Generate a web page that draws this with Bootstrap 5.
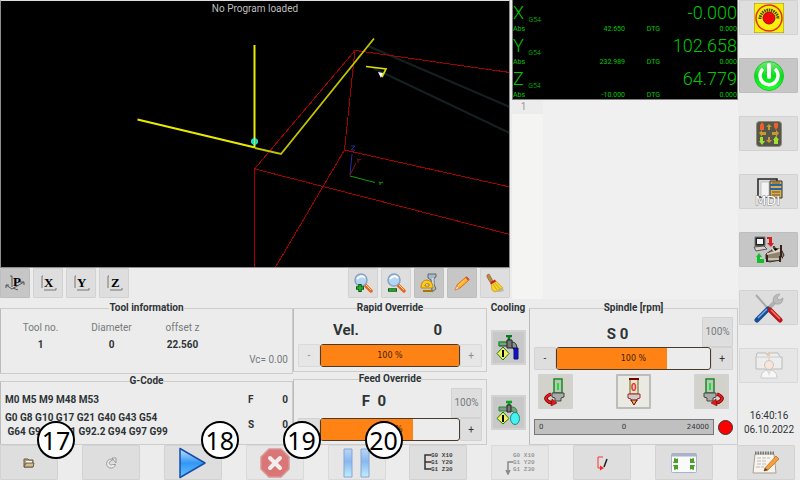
<!DOCTYPE html>
<html lang="en">
<head>
<meta charset="utf-8">
<meta name="viewport" content="width=device-width, initial-scale=1">
<title>CNC control</title>
<link href="https://cdn.jsdelivr.net/npm/bootstrap@5.3.0/dist/css/bootstrap.min.css" rel="stylesheet">
<style>
  body { font: 10px/14px Roboto, sans-serif; color: #2e3436; background: #ececec; }
  .screen { display: grid; grid-template-columns: minmax(0, 1fr) 62px; grid-template-rows: minmax(0, 1fr) auto; }
  .main-area { display: grid; grid-template-rows: minmax(0, 1fr) 146px; }
  .upper { display: grid; grid-template-columns: minmax(0, 512fr) minmax(0, 226fr); }
  .path-area { padding-right: 2px; }
  .view-bar { height: 31px; }
  .view-group { gap: 3px; }
  .btn { --bs-btn-padding-x: 0; --bs-btn-padding-y: 0; --bs-btn-font-size: 10px; --bs-btn-line-height: 14px;
         --bs-btn-color: #2e3436; --bs-btn-bg: #dedede; --bs-btn-border-color: #d2d2d2; --bs-btn-border-radius: 1px;
         --bs-btn-disabled-color: #8b8e8f; --bs-btn-disabled-bg: #e6e6e6; --bs-btn-disabled-border-color: #d9d9d9; --bs-btn-disabled-opacity: 1;
         --bs-btn-active-bg: #c6c6c6; --bs-btn-active-border-color: #bebebe;
         display: flex; align-items: center; justify-content: center; }
  .btn svg { display: block; }
  .wide-btn { width: 58px; height: 35px; }
  .side-btn { width: 59px; height: 35px; }
  .side-nav { gap: 23px; margin-left: 1px; }
  .tool-btn { width: 30px; height: 30px; }
  .plot { background: #000; border: 1px solid #8e8e8e; border-top-color: #ddd; color: #bfbfbf; }
  .plot svg { width: 100%; height: 100%; display: block; }
  .plot-title { top: 1px; }
  .dro { background: #000; color: #00c800; height: 100px; border: solid #808080; border-width: 0 1px 1px; }
  .dro-axis { height: 33px; }
  .dro-big { font-size: 18px; line-height: 26px; font-weight: 300; }
  .dro-small { font-size: 7px; line-height: 8px; }
  .dro-big .dro-small { vertical-align: -3px; }
  .dro-sub { display: grid; grid-template-columns: 112fr 35fr 77fr; line-height: 6px; }
  .editor { background: #f0f0f0; color: #999; }
  .gutter { width: 31px; background: #f4f4f3; }
  .gutter-line { height: 14px; background: #ececec; }
  .panels { display: grid; grid-template-columns: minmax(0, 293fr) minmax(0, 194fr) minmax(0, 42fr) minmax(0, 209fr); padding-top: 2px; }
  fieldset { border: 1px solid #ccc; border-left-color: #bbb; border-radius: 1px; }
  legend { float: none; width: auto; margin: 0 auto; padding: 0; font-size: 10px; line-height: 14px; font-weight: 700; }
  .h-short { height: 71px; }
  .h-tall { height: 73px; }
  .tool-table { width: 213px; table-layout: fixed; text-align: center; }
  .tool-table th { font-weight: 400; color: #777b7c; line-height: 17px; padding: 0; }
  .tool-table td { font-weight: 700; line-height: 17px; padding: 0; }
  .faint { color: #777b7c; }
  .codes { font-weight: 700; }
  .modal-m { margin: 5px 0 4px; }
  .fs-list { width: 40px; padding-top: 5px; gap: 11px; }
  .big-read { font-size: 15px; line-height: 18px; font-weight: 700; }
  .vel-row { padding: 0 40px 0 35px; }
  .read-row { padding-right: 32px; }
  .feed-row { margin-top: 2px; }
  .rpm-row { margin-top: 10px; }
  .step-btn { width: 22px; height: 23px; flex: none; }
  .meter { height: 23px; background: #ececec; border: 1px solid #4a3a2c; border-radius: 3px; }
  .meter .progress-bar { background: #ff8215; }
  .meter-text { inset: 0; font: 8px/22px "DejaVu Sans", sans-serif; color: #3e220c; text-align: center; }
  .reset-btn { width: 31px; height: 30px; }
  .frame-btn { width: 35px; height: 35px; --bs-btn-bg: #d2d2ca; --bs-btn-border-color: #d2d2d2; --bs-btn-border-width: 2px; }
  .frame-btn.cool { --bs-btn-bg: #c8c8c8; }
  .frame-btn.stop { --bs-btn-bg: #eaeae2; --bs-btn-border-color: #bcbcbc; }
  .rpm { height: 16px; background: #c0c0c0; border: 1px solid #777; font: 7px/14px "DejaVu Sans", sans-serif; display: grid; grid-template-columns: 1fr 1fr 1fr; }
  .lamp { width: 15px; height: 15px; background: #f00; border: 1px solid #333; }
  .marker { width: 38px; height: 38px; left: 37px; top: -24px; background: #fff; border: 2px solid #000; color: #000; font: 25px/34px "Noto Sans", sans-serif; text-align: center; z-index: 2; pointer-events: none; }
  .action-bar { grid-column: 1 / -1; padding-right: 5px; }
</style>
</head>
<body>
<div class="screen vh-100 overflow-hidden">
  <main class="main-area">
    <div class="upper">
      <section class="d-flex flex-column path-area" aria-label="Tool path">
        <div class="plot position-relative flex-grow-1 overflow-hidden w-100">
          <div class="plot-title position-absolute w-100 text-center">No Program loaded</div>
          <svg viewBox="1 1 508 266" preserveAspectRatio="xMinYMin slice" fill="none" aria-hidden="true">
            <g stroke="#152022" stroke-width="2"><path d="M368 46L510 107M373 68L510 133"/></g>
            <g stroke="#a80000" shape-rendering="crispEdges"><path d="M254.500 268V169L355 50.500L510 72.500M355 50L344.500 150L510 187M344.500 150L275 268M255 169L510 234.500"/></g>
            <path d="M255 148L281 154L374 38.500" stroke="#c4c400" stroke-width="1.800"/>
            <path d="M137.500 119.500L255 147.500" stroke="#eaea00" stroke-width="2"/>
            <path d="M254.500 45V147" stroke="#eaea00" stroke-width="2"/>
            <path d="M254.500 137l3.500 3v3l-3.500 3-3.500-3v-3z" fill="#18dcc4"/><path d="M254.500 136V147" stroke="#e0e840"/>
            <path d="M366 66.500L386 69L382 77" stroke="#dede00" stroke-width="1.700"/><path d="M378 72l5 1-2 5z" fill="#fff"/>
            <path d="M350 175L352 154M351 146h4l-4 4h4" stroke="#2c2ca0"/>
            <path d="M350 175L356 163M357 159l2 1 2-1M358 160v3" stroke="#801818"/>
            <path d="M350 176L375 182.500M379 182l2 1 2-1M380 183v2" stroke="#10a010"/>
          </svg>
        </div>
        <div class="d-flex justify-content-between view-bar">
          <div class="d-flex view-group">
            <button class="btn tool-btn active" aria-label="Perspective view"><svg width="20" height="20" viewBox="0 0 20 20"><path d="M5 3h2M7 3v11M1 12l6 4 12-7M1 15V12h3M15 9h4v3M8 15l5 2" fill="none" stroke="#555"/><text x="8" y="13" font-family="Liberation Serif" font-weight="700" font-size="13">P</text></svg></button>
            <button class="btn tool-btn" aria-label="X view"><svg width="20" height="20" viewBox="0 0 20 20"><path d="M5 3H4v12M6 17h12v-2" fill="none" stroke="#777"/><text x="6" y="14" font-family="Liberation Serif" font-weight="700" font-size="13">X</text></svg></button>
            <button class="btn tool-btn" aria-label="Y view"><svg width="20" height="20" viewBox="0 0 20 20"><path d="M5 3H4v12M6 17h12v-2" fill="none" stroke="#777"/><text x="6" y="14" font-family="Liberation Serif" font-weight="700" font-size="13">Y</text></svg></button>
            <button class="btn tool-btn" aria-label="Z view"><svg width="20" height="20" viewBox="0 0 20 20"><path d="M5 3H4v12M6 17h12v-2" fill="none" stroke="#777"/><text x="7" y="14" font-family="Liberation Serif" font-weight="700" font-size="13">Z</text></svg></button>
          </div>
          <div class="d-flex view-group">
            <button class="btn tool-btn" aria-label="Zoom in"><svg width="20" height="20" viewBox="0 0 20 20"><path d="M12 12l6 6" stroke="#e8662a" stroke-width="3.500" stroke-linecap="round"/><path d="M13 12l5 5" stroke="#ffd45a"/><circle cx="8" cy="7" r="6" fill="#b5d5f5" stroke="#88a4c4" stroke-width="1.500"/><path d="M4 6q4-5 8-1" fill="none" stroke="#fff" stroke-width="2"/><path d="M3 15h8M7 11v8" stroke="#085c08" stroke-width="3.500"/><path d="M4 15h6M7 12v6" stroke="#28b838" stroke-width="1.500"/></svg></button>
            <button class="btn tool-btn" aria-label="Zoom out"><svg width="20" height="20" viewBox="0 0 20 20"><path d="M12 12l6 6" stroke="#e8662a" stroke-width="3.500" stroke-linecap="round"/><path d="M13 12l5 5" stroke="#ffd45a"/><circle cx="8" cy="7" r="6" fill="#b5d5f5" stroke="#88a4c4" stroke-width="1.500"/><path d="M4 6q4-5 8-1" fill="none" stroke="#fff" stroke-width="2"/><path d="M2 17h9" stroke="#085c08" stroke-width="3.500"/><path d="M3 17h7" stroke="#28b838" stroke-width="1.500"/></svg></button>
            <button class="btn tool-btn active" aria-label="Dimensions"><svg width="20" height="20" viewBox="0 0 20 20"><path d="M9 1l8 0v3l-2 1v6l2 5-4 3-1-12-3-2z" fill="#a9b8c2" stroke="#596a78"/><path d="M14 5v9" stroke="#edf3f6"/><path d="M2 15q0-8 6-8 6 1 6 8z" fill="#ffc820" stroke="#c08800"/><path d="M6 12q1-2 4-1v2H6z" fill="#eee" stroke="#a87810"/><path d="M4 18h10" stroke="#aa7800" stroke-width="2"/></svg></button>
            <button class="btn tool-btn active" aria-label="Edit"><svg width="20" height="20" viewBox="0 0 20 20"><path d="M3 17l2-5L14 4l3 3L8 15z" fill="#ffb32c" stroke="#e46a1c"/><path d="M6 13l9-8" stroke="#ffe06a"/><path d="M3 17l2-4 2 2z" fill="#fff0d0" stroke="#c98950" stroke-width=".5"/><path d="M14 4l3 3" stroke="#dd4c30" stroke-width="2"/></svg></button>
            <button class="btn tool-btn" aria-label="Clear plot"><svg width="20" height="20" viewBox="0 0 20 20"><ellipse cx="13" cy="17" rx="6" ry="2" fill="#bbb"/><path d="M2 2l2-1 4 7-3 1-3-5z" fill="#b98b45" stroke="#8c642c" stroke-width=".7"/><path d="M6 10l5-2 7 7-8 4-3-2z" fill="#f5d22c" stroke="#c89c10" stroke-width=".7"/><path d="M8 11l4 6M10 10l5 6" stroke="#bf9b10" stroke-width=".7"/><path d="M5 9.500l5-3 1 2-5 3z" fill="#c82020"/></svg></button>
          </div>
        </div>
      </section>
      <section class="d-flex flex-column" aria-label="Position and program">
        <div class="dro">
          <div class="dro-axis"><div class="d-flex justify-content-between dro-big"><span>X <span class="dro-small">G54</span></span><span>-0.000</span></div><div class="dro-sub dro-small"><span class="d-flex justify-content-between"><span>Abs</span><span>42.650</span></span><span class="text-end">DTG</span><span class="text-end">0.000</span></div></div>
          <div class="dro-axis"><div class="d-flex justify-content-between dro-big"><span>Y <span class="dro-small">G54</span></span><span>102.658</span></div><div class="dro-sub dro-small"><span class="d-flex justify-content-between"><span>Abs</span><span>232.989</span></span><span class="text-end">DTG</span><span class="text-end">0.000</span></div></div>
          <div class="dro-axis"><div class="d-flex justify-content-between dro-big"><span>Z <span class="dro-small">G54</span></span><span>64.779</span></div><div class="dro-sub dro-small"><span class="d-flex justify-content-between"><span>Abs</span><span>-10.000</span></span><span class="text-end">DTG</span><span class="text-end">0.000</span></div></div>
        </div>
        <div class="editor flex-grow-1 d-flex"><div class="gutter"><div class="gutter-line text-center pe-2">1</div></div></div>
      </section>
    </div>

    <div class="panels">
      <div>
        <fieldset class="h-tall px-1">
          <legend>Tool information</legend>
          <table class="tool-table mt-1"><thead><tr><th>Tool no.</th><th>Diameter</th><th>offset z</th></tr></thead><tbody><tr><td>1</td><td>0</td><td>22.560</td></tr></tbody></table>
          <div class="text-end faint">Vc= 0.00</div>
        </fieldset>
        <fieldset class="h-short px-1 codes">
          <legend>G-Code</legend>
          <div class="d-flex">
            <div class="flex-grow-1"><div class="modal-m">M0 M5 M9 M48 M53</div><div>G0 G8 G10 G17 G21 G40 G43 G54<br>&nbsp;G64 G90 G91.1 G92.2 G94 G97 G99</div></div>
            <div class="d-flex flex-column fs-list"><div class="d-flex justify-content-between"><span>F</span><span>0</span></div><div class="d-flex justify-content-between"><span>S</span><span>0</span></div></div>
          </div>
        </fieldset>
      </div>
      <div>
        <fieldset class="h-short px-1 pb-1 d-flex flex-column">
          <legend>Rapid Override</legend>
          <div class="d-flex flex-grow-1 align-items-center justify-content-between big-read vel-row"><span>Vel.</span><span>0</span></div>
          <div class="d-flex"><button class="btn step-btn" disabled aria-label="Decrease rapid">-</button><div class="progress meter position-relative flex-grow-1" role="progressbar" aria-label="Rapid override" aria-valuenow="100"><div class="progress-bar" style="width:100%"></div><span class="meter-text position-absolute">100 %</span></div><button class="btn step-btn" disabled aria-label="Increase rapid">+</button></div>
        </fieldset>
        <fieldset class="h-tall px-1 d-flex flex-column">
          <legend>Feed Override</legend>
          <div class="d-flex justify-content-end position-relative feed-row"><span class="big-read read-row position-absolute start-0 w-100 text-center pt-1">F&nbsp; 0</span><button class="btn reset-btn faint position-relative">100%</button></div>
          <div class="d-flex"><button class="btn step-btn" aria-label="Decrease feed">-</button><div class="progress meter position-relative flex-grow-1" role="progressbar" aria-label="Feed override" aria-valuenow="100"><div class="progress-bar" style="width:67%"></div><span class="meter-text position-absolute">100 %</span></div><button class="btn step-btn" aria-label="Increase feed">+</button></div>
        </fieldset>
      </div>
      <section class="d-flex flex-column align-items-center" aria-label="Cooling">
        <strong>Cooling</strong>
        <div class="d-flex flex-column justify-content-around flex-grow-1">
          <button class="btn frame-btn cool" aria-label="Flood"><svg width="24" height="26" viewBox="0 0 24 26"><path d="M10 1h6M13 1v5" stroke="#0a7a20" stroke-width="2.500"/><path d="M3 7h13q5 0 5 7h-4q0-3-3-3H3z" fill="#89968c" stroke="#163d20"/><path d="M11 5h5v8h-5z" fill="#777" stroke="#222"/><path d="M3 7v4M2 7H10" stroke="#10c830"/><path d="M17 13h5v11h-4V14z" fill="#1010d8" stroke="#101060"/><path d="M7 12l6 6.500L7 25 1 18.500z" fill="#f5ee60" stroke="#158015"/><path d="M7 15v7" stroke="#000" stroke-width="2"/></svg></button>
          <button class="btn frame-btn cool" aria-label="Mist"><svg width="24" height="26" viewBox="0 0 24 26"><path d="M10 2h6M13 1v6" stroke="#0aa520" stroke-width="2.500"/><path d="M3 7h13q5 0 5 6h-3q0-2-3-2H3z" fill="#89968c" stroke="#189030"/><path d="M11 5h4v7h-4z" fill="#777" stroke="#222"/><ellipse cx="19" cy="18.500" rx="4.500" ry="6" fill="#48f0f0" stroke="#168c8c"/><path d="M7 12l6 6.500L7 24 1 18.500z" fill="#f5ee60" stroke="#158015"/><path d="M7 15v7" stroke="#000" stroke-width="2"/></svg></button>
        </div>
      </section>
      <fieldset class="d-flex flex-column px-1">
        <legend>Spindle [rpm]</legend>
        <div class="d-flex justify-content-end position-relative feed-row"><span class="big-read read-row position-absolute start-0 w-100 text-center pt-2">S 0</span><button class="btn reset-btn faint position-relative">100%</button></div>
        <div class="d-flex"><button class="btn step-btn" aria-label="Decrease spindle">-</button><div class="progress meter position-relative flex-grow-1" role="progressbar" aria-label="Spindle override" aria-valuenow="100"><div class="progress-bar" style="width:72%"></div><span class="meter-text position-absolute">100 %</span></div><button class="btn step-btn" aria-label="Increase spindle">+</button></div>
        <div class="d-flex justify-content-between px-1 mt-1">
          <button class="btn frame-btn" aria-label="Spindle reverse"><svg width="24" height="28" viewBox="0 0 24 28"><path d="M10 1h8v14h-8z" fill="#bcc4bc" stroke="#148c24" stroke-width="1.500"/><path d="M8 15h12v4l-3 1v3h-6v-3l-3-1z" fill="#aaa" stroke="#444"/><path d="M14 5v7" stroke="#12e828" stroke-width="2"/><path d="M7 16q-9 4-2 8l4 1" fill="none" stroke="#600" stroke-width="3.500"/><path d="M7 16q-9 4-2 8l4 1" fill="none" stroke="#e51818" stroke-width="2"/><path d="M8 21l5 4-6 3z" fill="#e51818" stroke="#600" stroke-width=".5"/></svg></button>
          <button class="btn frame-btn stop" aria-label="Spindle stop"><svg width="24" height="28" viewBox="0 0 24 28"><path d="M8 1h8v15H8z" fill="#e8e4c8" stroke="#656520"/><path d="M7 1h10" stroke="#700" stroke-width="2"/><path d="M6 16h12v4l-3 1v2H9v-2l-3-1z" fill="#ccc" stroke="#a22"/><path d="M9 22h6l-3 5z" fill="#e0b850" stroke="#700"/><text x="9" y="13" font-family="Liberation Sans" font-weight="700" font-size="10" fill="#f02020">0</text></svg></button>
          <button class="btn frame-btn" aria-label="Spindle forward"><svg width="24" height="28" viewBox="0 0 24 28"><path d="M6 1h8v14H6z" fill="#bcc4bc" stroke="#148c24" stroke-width="1.500"/><path d="M4 15h12v4l-3 1v3H7v-3l-3-1z" fill="#aaa" stroke="#444"/><path d="M10 5v7" stroke="#12e828" stroke-width="2"/><path d="M17 16q9 4 2 8l-4 1" fill="none" stroke="#600" stroke-width="3.500"/><path d="M17 16q9 4 2 8l-4 1" fill="none" stroke="#e51818" stroke-width="2"/><path d="M16 21l-5 4 6 3z" fill="#e51818" stroke="#600" stroke-width=".5"/></svg></button>
        </div>
        <div class="d-flex align-items-center gap-1 rpm-row"><div class="rpm flex-grow-1 px-1"><span>0</span><span class="text-center">0</span><span class="text-end">24000</span></div><span class="lamp rounded-circle"></span></div>
      </fieldset>
    </div>
  </main>

  <aside class="d-flex flex-column">
    <nav class="d-flex flex-column side-nav" aria-label="Modes">
      <button class="btn side-btn" aria-label="Emergency stop"><svg width="30" height="30" viewBox="0 0 30 30"><path d="M0 0h30v30H0z" fill="#f8ee10" stroke="#8d8840"/><circle cx="15" cy="15" r="13" fill="none" stroke="#e63010" stroke-width="1.500"/><path d="M6 16a9 9 0 1 1 18 0" fill="none" stroke="#4c4810" stroke-width="3" stroke-dasharray="1.500 .8"/><circle cx="15" cy="15" r="6" fill="#f00808" stroke="#921010"/></svg></button>
      <button class="btn side-btn active" aria-label="Machine on"><svg width="30" height="30" viewBox="0 0 30 30"><defs><linearGradient id="pw" x2="0" y2="1"><stop stop-color="#74e979"/><stop offset=".5" stop-color="#06df17"/><stop offset="1" stop-color="#28ff32"/></linearGradient></defs><circle cx="15" cy="15" r="14.500" fill="url(#pw)" stroke="#20c530"/><path d="M9 8a9 9 0 1 0 12 0" fill="none" stroke="#fff" stroke-width="3.500"/><path d="M15 4v12" stroke="#fff" stroke-width="4" stroke-linecap="round"/></svg></button>
      <button class="btn side-btn" aria-label="Manual"><svg width="26" height="26" viewBox="0 0 26 26"><rect x=".5" y=".5" width="25" height="25" rx="3" fill="#57564a" stroke="#8e8a7a"/><g fill="#c49a32"><path d="M13 3l3 3h-2v3h-2V6h-2zM13 22l3-3h-2v-3h-2v3h-2zM3 12l3-3v2h4v3H6v2zM23 12l-3-3v2h-4v3h4v2z"/></g><g fill="#ee602a"><path d="M6 1l2 3v5H4V4zM20 9l-2-3V2h4v4z"/></g><g fill="#a0e030"><path d="M4 16h3v4h2l-3 4-3-4h1zM20 15l3 4h-1v4h-4v-4h-1z"/></g></svg></button>
      <button class="btn side-btn" aria-label="MDI"><svg width="30" height="30" viewBox="0 0 30 30"><path d="M4 2h19v18H4z" fill="#ddd" stroke="#222" stroke-width="1.500"/><path d="M7 5h8v15H7z" fill="#f3f3f3" stroke="#999" stroke-width=".5"/><path d="M16 4h12v17H16z" fill="#d9ac55" stroke="#333"/><path d="M16 8h12M16 12h12" stroke="#23699c" stroke-width="2"/><path d="M18 6h8M18 15h8M18 18h8" stroke="#705020"/><text x="1" y="28" font-family="DejaVu Sans" font-size="13" fill="#fff" stroke="#888" stroke-width="1" paint-order="stroke">MDI</text></svg></button>
      <button class="btn side-btn active" aria-label="Auto"><svg width="32" height="32" viewBox="0 0 32 32"><path d="M2 3h10v9H2z" fill="#222" stroke="#777"/><path d="M4 5h6v5H4z" fill="#f5f5f5"/><path d="M1 13l10-1 3 3-11 2z" fill="#d4d4cc" stroke="#555"/><path d="M14 3h5v6h2l-3 4-4-4h2V5h-2z" fill="#d42020"/><path d="M3 23l3-4 3 4H7v2h4v4H4v-6z" fill="#10c028"/><path d="M13 20l6-4 2-4 2 3h5l3 6-3 5-12 2-3-3z" fill="#8c8372" stroke="#302c28"/><path d="M14 20l13-3M19 14l3 4 5-3M13 25h16" stroke="#ded4bb" stroke-width="1.500"/><path d="M28 11v12M14 21v7M27 22v6" stroke="#38211c" stroke-width="2"/></svg></button>
      <button class="btn side-btn" aria-label="Settings"><svg width="30" height="30" viewBox="0 0 30 30"><path d="M2 2l15 17" stroke="#aaa" stroke-width="2"/><path d="M15 15l9-9" stroke="#b0b0b0" stroke-width="4"/><path d="M19 8q0-7 7-7l-3 4 2 2 4-2q0 7-7 6z" fill="#bbb" stroke="#999" stroke-width=".6"/><path d="M3 27L14 16" stroke="#174f94" stroke-width="5" stroke-linecap="round"/><path d="M4 25l9-9" stroke="#72aae8" stroke-width="1.500"/><path d="M16 17l10 10" stroke="#b71920" stroke-width="5" stroke-linecap="round"/><path d="M17 17l9 9" stroke="#ff7465" stroke-width="1.500"/></svg></button>
      <button class="btn side-btn" disabled aria-label="User tabs"><svg width="28" height="28" viewBox="0 0 28 28"><path d="M1 5l1-4h9l2 3V1h10l2 4 2 0v12H1z" fill="#ededed" stroke="#bbb"/><path d="M1 5h26M14 5v12" stroke="#ccc"/><path d="M12 1h3v3h-3z" fill="#f1c69c"/><path d="M6 26q0-8 8-8t8 8z" fill="#f7f7f7" stroke="#ccc"/><circle cx="14" cy="13" r="4.500" fill="#f5e6dc" stroke="#d2c2b8"/><path d="M12 19l2 5 2-5" fill="#ddd"/></svg></button>
    </nav>
    <div class="mt-auto mb-2 text-center"><time>16:40:16<br>06.10.2022</time></div>
  </aside>

  <footer class="d-flex justify-content-between action-bar">
    <div class="position-relative"><button class="btn wide-btn" aria-label="Open"><svg width="12" height="12" viewBox="0 0 12 12"><path d="M1 2h4l1 1h4v7H1z" fill="#b6a078" stroke="#695c42"/><path d="M3 4h6v3H3z" fill="#fff"/><path d="M1 10l2-4h8l-1 4z" fill="#d2bd94" stroke="#695c42"/></svg></button><span class="marker position-absolute rounded-circle">17</span></div>
    <div><button class="btn wide-btn" aria-label="Reload"><svg width="12" height="12" viewBox="0 0 12 12"><path d="M8 2.500a4.500 4.500 0 1 0 2.500 5H7.500A2 2 0 1 1 6 4z" fill="#eee" stroke="#999"/><path d="M7 1h4v5z" fill="#eee" stroke="#999"/></svg></button></div>
    <div class="position-relative"><button class="btn wide-btn" aria-label="Run"><svg width="30" height="32" viewBox="0 0 30 32"><defs><linearGradient id="pl" x2="0" y2="1"><stop stop-color="#c4e2ff"/><stop offset=".5" stop-color="#3496f5"/><stop offset="1" stop-color="#62c4ff"/></linearGradient></defs><path d="M2 1.500L27 16 2 30.500z" fill="url(#pl)" stroke="#174ea8" stroke-width="1.500" stroke-linejoin="round"/></svg></button><span class="marker position-absolute rounded-circle">18</span></div>
    <div class="position-relative"><button class="btn wide-btn" disabled aria-label="Stop"><svg width="30" height="30" viewBox="0 0 30 30"><path d="M9 1h12l8 8v12l-8 8H9l-8-8V9z" fill="#da7676" stroke="#d89797" stroke-width="1.500"/><path d="M10 10l10 10M20 10L10 20" stroke="#f4eded" stroke-width="4" stroke-linecap="round"/></svg></button><span class="marker position-absolute rounded-circle">19</span></div>
    <div class="position-relative"><button class="btn wide-btn" disabled aria-label="Pause"><svg width="28" height="32" viewBox="0 0 28 32"><defs><linearGradient id="pa" x2="0" y2="1"><stop stop-color="#b8d6f5"/><stop offset=".45" stop-color="#88b8ee"/><stop offset="1" stop-color="#c0eefc"/></linearGradient></defs><path d="M1 2h8v28H1zM18 2h8v28h-8z" fill="url(#pa)" stroke="#87a4d2"/></svg></button><span class="marker position-absolute rounded-circle">20</span></div>
    <div><button class="btn wide-btn" aria-label="Step"><svg width="32" height="24" viewBox="0 0 32 24"><path d="M9 4H3v14h6M3 11h6" fill="none" stroke="#333" stroke-width="1.500"/><g font-family="Liberation Mono" font-weight="700" font-size="6" fill="#444"><text x="9" y="6">G0 X10</text><text x="9" y="13">G1 Y20</text><text x="9" y="20">G1 Z30</text></g></svg></button></div>
    <div><button class="btn wide-btn" disabled aria-label="Run from line"><svg width="32" height="24" viewBox="0 0 32 24"><path d="M9 11H4v10M2 19l2 4 2-4" fill="none" stroke="#888" stroke-width="1.500"/><g font-family="Liberation Mono" font-weight="700" font-size="6" fill="#999"><text x="9" y="6">G0 X10</text><text x="9" y="13">G1 Y20</text><text x="9" y="20">G1 Z30</text></g></svg></button></div>
    <div><button class="btn wide-btn" aria-label="Skip lines"><svg width="14" height="16" viewBox="0 0 14 16"><path d="M8 2H3v11h3" fill="none" stroke="#f33"/><path d="M5 10.500l4 2.500-4 2.500z" fill="#f22"/><path d="M12 4L9 12" stroke="#222" stroke-width="1.500"/></svg></button></div>
    <div><button class="btn wide-btn" aria-label="Full size"><svg width="26" height="20" viewBox="0 0 26 20"><rect x=".5" y=".5" width="25" height="19" rx="1" fill="#f8fafc" stroke="#a9b2c6"/><path d="M1 2h24" stroke="#a9b2c6" stroke-width="3"/><g fill="#4c9e24"><path d="M3 5l3 1 1-1v5H2l1-2zM23 5l-3 1-1-1v5h5l-1-2zM3 17l3-1 1 1v-5H2l1 2zM23 17l-3-1-1 1v-5h5l-1 2z"/></g></svg></button></div>
    <div><button class="btn wide-btn" aria-label="Edit program"><svg width="28" height="26" viewBox="0 0 28 26"><path d="M3 4h19l2 19H1z" fill="#f6f4ec" stroke="#a5a093"/><path d="M3 3h19" stroke="#777" stroke-width="3" stroke-dasharray="1.500 1"/><path d="M5 8h13M5 11h10M5 14h9M4 17h8" stroke="#bbb" stroke-dasharray="4 1"/><path d="M13 18l11-12 3 3-11 11-4 1z" fill="#f5a03c" stroke="#b46c22" stroke-width=".7"/><path d="M12 21l1-3 3 2z" fill="#553c28"/></svg></button></div>
  </footer>
</div>
<script src="https://cdn.jsdelivr.net/npm/bootstrap@5.3.0/dist/js/bootstrap.bundle.min.js"></script>
</body>
</html>
